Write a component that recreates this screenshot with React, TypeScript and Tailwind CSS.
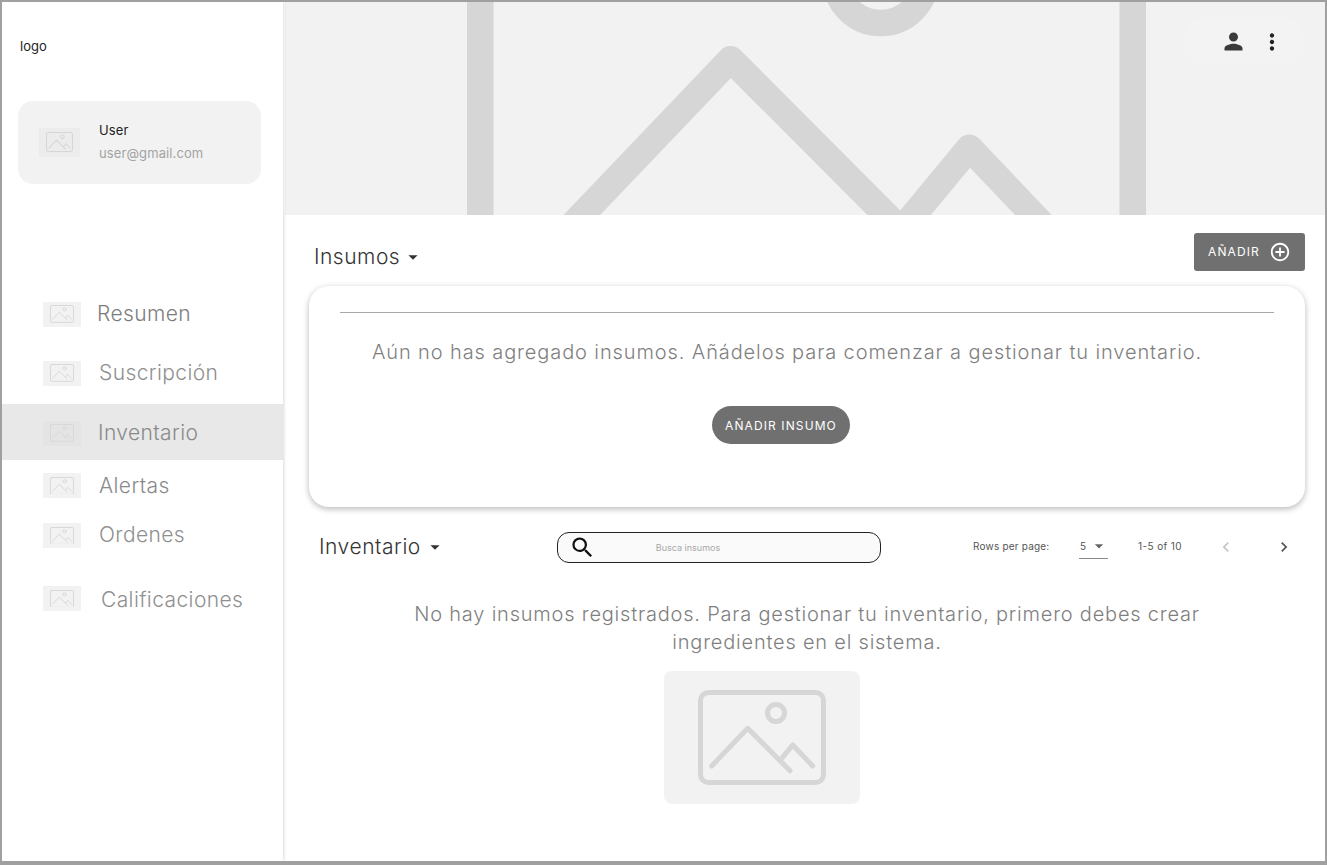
import React from "react";
import {
  MdPerson,
  MdMoreVert,
  MdSearch,
  MdArrowDropDown,
  MdAddCircleOutline,
  MdChevronLeft,
  MdChevronRight,
} from "react-icons/md";

const Placeholder = ({ className }: { className: string }) => (
  <svg viewBox="0 0 128 95" fill="none" stroke="#d6d6d6" strokeWidth="5" strokeLinecap="round" strokeLinejoin="round" className={className}>
    <rect x="2.5" y="2.5" width="123" height="90" rx="8" />
    <circle cx="78" cy="23" r="8.5" />
    <path d="M13.7 76 49.7 38.3 92 80.7" />
    <path d="M83.7 68.3 94.7 55 114.7 76" />
  </svg>
);

const navItems = [
  { label: "Resumen", row: "h-[56px]", gap: "gap-[16px]", text: "text-[#7c7c7c]", thumb: "bg-[#f2f2f2]" },
  { label: "Suscripción", row: "h-[62px]", gap: "gap-[18px]", text: "text-[#8f8f8f]", thumb: "bg-[#f2f2f2]" },
  { label: "Inventario", row: "h-[56px] bg-[#e8e8e8]", gap: "gap-[17px]", text: "text-[#8a8a8a] translate-y-px", thumb: "bg-[#e4e4e4] translate-y-px" },
  { label: "Alertas", row: "h-[51px]", gap: "gap-[18px]", text: "text-[#8a8a8a]", thumb: "bg-[#f2f2f2]" },
  { label: "Ordenes", row: "h-[49px]", gap: "gap-[18px]", text: "text-[#8f8f8f] -translate-y-px", thumb: "bg-[#f2f2f2]" },
  { label: "Calificaciones", row: "h-[77px]", gap: "gap-[20px]", text: "text-[#8f8f8f] translate-y-px", thumb: "bg-[#f2f2f2]" },
];

const Sidebar = () => (
  <aside className="z-10 flex w-[281px] shrink-0 flex-col bg-white shadow-[1px_0_3px_rgba(0,0,0,0.14)]">
    <div className="flex h-[88px] items-center pl-[18px] pt-[2px] text-[13px] text-[#222]">logo</div>
    <div className="mx-[16px] mt-[11px] flex h-[83px] w-[243px] items-center rounded-[15px] bg-[#f2f2f2] pl-[21px]">
      <div className="flex h-[29px] w-[41px] items-center justify-center bg-[#ececec]">
        <Placeholder className="w-[27px]" />
      </div>
      <div className="ml-[19px] flex flex-col gap-[7px] pb-[3px]">
        <span className="text-[13px] leading-[16px] tracking-[0.1px] text-[#222]">User</span>
        <span className="text-[13px] leading-[16px] tracking-[0.1px] text-[#a3a3a3]">user@gmail.com</span>
      </div>
    </div>
    <nav className="mt-[102px] flex flex-col">
      {navItems.map((item) => (
        <div key={item.label} className={`flex items-center pl-[41px] ${item.row} ${item.gap}`}>
          <div className={`flex h-[25px] w-[38px] shrink-0 items-center justify-center ${item.thumb}`}>
            <Placeholder className="w-[24px]" />
          </div>
          <span className={`text-[21px] font-light tracking-[0.4px] ${item.text}`}>{item.label}</span>
        </div>
      ))}
    </nav>
  </aside>
);

const Banner = () => (
  <div className="relative flex h-[213px] shrink-0 items-center justify-center overflow-hidden bg-[#f2f2f2]">
    <Placeholder className="w-[679px] shrink-0 translate-x-[1px] -translate-y-[1px]" />
    <div className="absolute right-[20px] top-[16px] flex h-[47px] w-[122px] items-center rounded-[24px] bg-[#f3f3f3] pl-[37px] text-[#3a3a3a]">
      <MdPerson size={27} />
      <MdMoreVert size={26} className="ml-[12px] text-[#222]" />
    </div>
  </div>
);

const Insumos = () => (
  <section className="flex flex-col pl-[24px] pr-[20px]">
    <div className="mt-[18px] flex h-[38px] items-center justify-between">
      <div className="ml-[5px] mt-[10px] flex items-center text-[#333]">
        <span className="text-[21px] font-light tracking-[0.5px]">Insumos</span>
        <MdArrowDropDown size={22} className="ml-[2px]" />
      </div>
      <button className="flex h-[38px] w-[111px] items-center rounded-[3px] bg-[#707070] pl-[14px] text-[12px] tracking-[1.1px] text-white">
        AÑADIR
        <MdAddCircleOutline size={22} className="ml-[9px]" />
      </button>
    </div>
    <div className="mt-[15px] flex h-[221px] flex-col items-center rounded-[20px] bg-white shadow-[0_2px_6px_rgba(0,0,0,0.28)]">
      <div className="mt-[26px] h-px w-[934px] bg-[#a8a8a8]" />
      <p className="ml-[-40px] mt-[25px] text-[20px] font-light leading-[28px] tracking-[0.89px] text-[#7f7f7f]">
        Aún no has agregado insumos. Añádelos para comenzar a gestionar tu inventario.
      </p>
      <button className="ml-[-53px] mt-[40px] flex h-[38px] w-[138px] items-center justify-center rounded-full bg-[#707070] pl-px pt-[2px] text-[12px] tracking-[1.1px] text-white">
        AÑADIR INSUMO
      </button>
    </div>
  </section>
);

const Inventario = () => (
  <section className="flex flex-col pl-[34px] pr-[20px]">
    <div className="mt-[25px] flex h-[31px] items-center">
      <div className="flex w-[238px] items-center pb-[2px] text-[#333]">
        <span className="text-[21px] font-light tracking-[0.55px]">Inventario</span>
        <MdArrowDropDown size={22} className="ml-[3px]" />
      </div>
      <div className="relative flex h-[31px] w-[324px] items-center justify-center rounded-[12px] border border-[#222] bg-[#fafafa]">
        <MdSearch size={27} className="absolute left-[11px] text-[#111]" />
        <span className="ml-[-62px] text-[9px] text-[#a8a8a8]">Busca insumos</span>
      </div>
      <div className="ml-[92px] flex items-center text-[10px] tracking-[0.2px] text-[#555]">
        <span className="w-[106px] pb-[2px]">Rows per page:</span>
        <div className="relative flex h-[23px] w-[29px] items-center border-b border-[#8a8a8a] pb-[2px] pl-px">
          5
          <MdArrowDropDown size={20} className="absolute right-[-1px] top-0 text-[#666]" />
        </div>
        <span className="ml-[30px] w-[66px] pb-[2px] tracking-[0.4px]">1-5 of 10</span>
        <MdChevronLeft size={20} className="mb-[2px] ml-[12px] text-[#c4c4c4]" />
        <MdChevronRight size={20} className="mb-[2px] ml-[38px] text-[#555]" />
      </div>
    </div>
    <p className="ml-[-34px] mr-[-20px] mt-[37px] pl-[4px] text-center text-[20px] font-light leading-[28px] tracking-[0.79px] text-[#7f7f7f]">
      No hay insumos registrados. Para gestionar tu inventario, primero debes crear
      <br />
      ingredientes en el sistema.
    </p>
    <div className="ml-[345px] mt-[15px] flex h-[133px] w-[196px] items-center justify-center rounded-[8px] bg-[#f2f2f2]">
      <Placeholder className="w-[128px]" />
    </div>
  </section>
);

export default function App() {
  return (
    <div className="flex h-screen w-full overflow-hidden border-b-[4px] border-l-[2px] border-r-[2px] border-t-[2px] border-[#a0a0a0] bg-white font-['Inter',sans-serif]">
      <Sidebar />
      <main className="flex min-w-0 flex-1 flex-col pl-[2px]">
        <Banner />
        <Insumos />
        <Inventario />
      </main>
    </div>
  );
}
